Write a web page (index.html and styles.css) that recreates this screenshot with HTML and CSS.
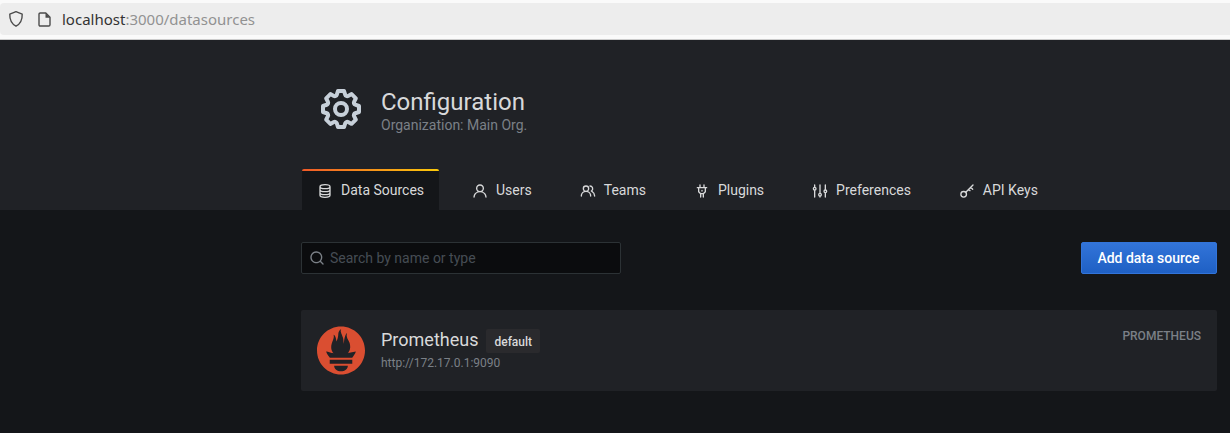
FILE: index.html
```html
<!DOCTYPE html>
<html lang="en">
<head>
<meta charset="utf-8">
<title>Configuration: Data Sources</title>
<link rel="stylesheet" href="styles.css">
</head>
<body>
<div class="browser-bar">
  <div class="address">
    <svg class="shield" width="16" height="18" viewBox="0 0 16 18"><path d="M8 1.600 14.200 4.100C14.400 9.400 12.500 13.800 8 16.200 3.500 13.800 1.600 9.400 1.800 4.100Z"/></svg>
    <svg class="page-icon" width="13" height="15" viewBox="0 0 13 15"><path class="outline" d="M2.300 1h5.500L12 5.200v7.500c0 .8-.5 1.300-1.300 1.300H2.300C1.500 14 1 13.500 1 12.700V2.300C1 1.500 1.500 1 2.300 1Z"/><path class="fold" d="M7.500 1v4.700H12Z"/></svg>
    <span class="url"><b>localhost</b>:3000/datasources</span>
  </div>
</div>
<header class="page-header">
  <div class="title-row">
    <svg class="icon gear" width="48" height="48" viewBox="0 0 24 24"><path d="M21.32,9.55l-1.89-.63.89-1.78A1,1,0,0,0,20.13,6L18,3.87a1,1,0,0,0-1.15-.19l-1.78.89-.63-1.89A1,1,0,0,0,13.5,2h-3a1,1,0,0,0-.95.68L8.92,4.57,7.14,3.68A1,1,0,0,0,6,3.87L3.87,6a1,1,0,0,0-.19,1.15l.89,1.78-1.89.63A1,1,0,0,0,2,10.5v3a1,1,0,0,0,.68.95l1.89.63-.89,1.78A1,1,0,0,0,3.87,18L6,20.13a1,1,0,0,0,1.15.19l1.78-.89.63,1.89a1,1,0,0,0,.95.68h3a1,1,0,0,0,.95-.68l.63-1.89,1.78.89A1,1,0,0,0,18,20.13L20.13,18a1,1,0,0,0,.19-1.15l-.89-1.78,1.89-.63A1,1,0,0,0,22,13.5v-3A1,1,0,0,0,21.32,9.55ZM20,12.78l-1.2.4A2,2,0,0,0,17.64,16l.57,1.14-1.1,1.1L16,17.64a2,2,0,0,0-2.79,1.16l-.4,1.2H11.22l-.4-1.2A2,2,0,0,0,8,17.64l-1.14.57-1.1-1.1L6.36,16A2,2,0,0,0,5.2,13.18L4,12.78V11.22l1.2-.4A2,2,0,0,0,6.36,8L5.79,6.89l1.1-1.1L8,6.36A2,2,0,0,0,10.82,5.2l.4-1.2h1.56l.4,1.2A2,2,0,0,0,16,6.36l1.14-.57,1.1,1.1L17.64,8a2,2,0,0,0,1.16,2.79l1.2.4ZM12,8a4,4,0,1,0,4,4A4,4,0,0,0,12,8Zm0,6a2,2,0,1,1,2-2A2,2,0,0,1,12,14Z"/></svg>
    <div>
      <h1>Configuration</h1>
      <div class="subtitle">Organization: Main Org.</div>
    </div>
  </div>
  <nav class="tabs">
    <a class="tab active"><svg class="icon line" width="16" height="16" viewBox="0 0 24 24"><path d="M4.500 5.500c0-1.800 3-3 7.500-3s7.500 1.200 7.500 3-3 3-7.500 3-7.500-1.200-7.500-3ZM4.500 5.500v13c0 1.800 3 3 7.500 3s7.500-1.200 7.500-3v-13M4.500 10c0 1.800 3 3 7.500 3s7.500-1.200 7.500-3M4.500 14.500c0 1.800 3 3 7.500 3s7.500-1.200 7.500-3"/></svg>Data Sources</a>
    <a class="tab"><svg class="icon" width="16" height="16" viewBox="0 0 24 24"><path d="M15.710,12.710a6,6,0,1,0-7.420,0,10,10,0,0,0-6.220,8.180,1,1,0,0,0,2,.22,8,8,0,0,1,15.900,0,1,1,0,0,0,1,.89h.11a1,1,0,0,0,.88-1.100A10,10,0,0,0,15.710,12.710ZM12,12a4,4,0,1,1,4-4A4,4,0,0,1,12,12Z"/></svg>Users</a>
    <a class="tab"><svg class="icon" width="16" height="16" viewBox="0 0 24 24"><path d="M12.300,12.220A4.920,4.920,0,0,0,14,8.500a5,5,0,0,0-10,0,4.920,4.920,0,0,0,1.700,3.720A8,8,0,0,0,1,19.500a1,1,0,0,0,2,0,6,6,0,0,1,12,0,1,1,0,0,0,2,0A8,8,0,0,0,12.300,12.220ZM9,11.500a3,3,0,1,1,3-3A3,3,0,0,1,9,11.500Zm9.740.32A5,5,0,0,0,15,3.500a1,1,0,0,0,0,2,3,3,0,0,1,3,3,3,3,0,0,1-1.500,2.590,1,1,0,0,0-.5.84,1,1,0,0,0,.45.86l.39.26.13.07a7,7,0,0,1,4,6.380,1,1,0,0,0,2,0A9,9,0,0,0,18.740,11.820Z"/></svg>Teams</a>
    <a class="tab"><svg class="icon line" width="16" height="16" viewBox="0 0 24 24"><path d="M5 7h14M9 7V3M15 7V3M7 7v6l3 3h4l3-3V7M10 16v5M14 16v5M12 11v1"/></svg>Plugins</a>
    <a class="tab"><svg class="icon line" width="16" height="16" viewBox="0 0 24 24"><path d="M4 3v3.500M4 11v10M12 3v12M12 20v1M20 3v7M20 15v6"/><circle cx="4" cy="8.500" r="2"/><circle cx="12" cy="17.500" r="2"/><circle cx="20" cy="12.500" r="2"/></svg>Preferences</a>
    <a class="tab"><svg class="icon line" width="16" height="16" viewBox="0 0 24 24"><circle cx="7" cy="17" r="4.200"/><path d="M10.200 13.800 21 3M17.500 6.500l3 3M14.500 9.500l2 2"/></svg>API Keys</a>
  </nav>
</header>
<main class="content">
  <div class="toolbar">
    <div class="search">
      <svg class="icon" width="16" height="16" viewBox="0 0 24 24"><path d="M21.710,20.290,18,16.610A9,9,0,1,0,16.610,18l3.680,3.680a1,1,0,0,0,1.420,0A1,1,0,0,0,21.710,20.290ZM11,18a7,7,0,1,1,7-7A7,7,0,0,1,11,18Z"/></svg>
      <span>Search by name or type</span>
    </div>
    <button class="add">Add data source</button>
  </div>
  <section class="card">
    <svg class="logo" width="48" height="48" viewBox="0 0 24 24"><path transform="translate(0 .2)" d="M12 0C5.373 0 0 5.372 0 12c0 6.627 5.373 12 12 12s12-5.373 12-12c0-6.628-5.373-12-12-12zm0 22.460c-1.885 0-3.414-1.260-3.414-2.814h6.828c0 1.553-1.528 2.813-3.414 2.813zm5.640-3.745H6.360v-2.046h11.280v2.046zm-.04-3.098H6.391c-.037-.043-.075-.086-.111-.13-1.155-1.401-1.427-2.133-1.690-2.879-.005-.025 1.400.287 2.395.511 0 0 .513.119 1.262.255-.72-.843-1.147-1.915-1.147-3.010 0-2.406 1.845-4.508 1.180-6.207.648.053 1.340 1.367 1.387 3.422.689-.951.977-2.690.977-3.755 0-1.103.727-2.385 1.454-2.429-.648 1.069.168 1.984.893 4.256.272.854.237 2.290.447 3.201.07-1.892.395-4.652 1.595-5.605-.529 1.200.079 2.702.494 3.424.671 1.164 1.078 2.047 1.078 3.716a4.642 4.642 0 0 1-1.110 2.996c.792-.149 1.340-.283 1.340-.283l2.573-.502s-.374 1.538-1.810 3.019z"/></svg>
    <div class="details">
      <div class="name">Prometheus<span class="badge">default</span></div>
      <div class="endpoint">http://172.17.0.1:9090</div>
    </div>
    <div class="type">PROMETHEUS</div>
  </section>
</main>
</body>
</html>
```
FILE: styles.css
```css
* { box-sizing: border-box; }
body {
  margin: 0;
  height: 433px;
  overflow: hidden;
  background: #141619;
  color: #d8d9da;
  font: 14px/20px Roboto, sans-serif;
}
.browser-bar {
  height: 40px;
  padding-top: 3px;
  background: #fafafa;
  border-bottom: 1px solid #ccc;
}
.address {
  display: flex;
  align-items: center;
  height: 32px;
  padding-left: 8px;
  background: #ededed;
  border-radius: 4px 0 0 4px;
}
.shield, .page-icon .outline { fill: none; stroke: #4b4b4b; stroke-width: 1.4; stroke-linejoin: round; }
.page-icon { margin: 0 11px 0 14px; }
.page-icon .fold { fill: #4b4b4b; }
.url {
  color: #929292;
  font: 15px/20px "Noto Sans", sans-serif;
}
.url b { color: #333; font-weight: 400; }
.page-header {
  height: 170px;
  padding: 45px 0 0 301px;
  background: #202226;
  border-bottom: 1px solid #202226;
}
.title-row { display: flex; gap: 16px; height: 84px; padding-left: 16px; }
.icon { flex: none; fill: currentColor; }
.line { fill: none; stroke: currentColor; stroke-width: 2; stroke-linecap: round; stroke-linejoin: round; }
.gear { color: #c7d0d9; }
h1 { margin: 3px 0 0; font-size: 24px; line-height: 28px; font-weight: 400; }
.subtitle { color: #7b8087; line-height: 18px; }
.tabs { display: flex; height: 41px; padding-left: 1px; }
.tab {
  display: flex;
  align-items: center;
  gap: 8px;
  height: 41px;
  margin-right: 16px;
  padding: 0 16px;
  white-space: nowrap;
}
.tab .icon { margin-top: 2px; }
.active {
  width: 137px;
  margin-right: 17px;
  padding-left: 15px;
  background: linear-gradient(90deg, #f05a28, #fbca0a) top / 100% 2px no-repeat, #141619;
  border-radius: 2px 2px 0 0;
}
.content { padding: 32px 13px 0 301px; }
.toolbar { display: flex; justify-content: space-between; }
.search {
  display: flex;
  align-items: center;
  gap: 5px;
  width: 320px;
  height: 32px;
  padding-left: 7px;
  background: #0b0c0e;
  border: 1px solid #2c3235;
  border-radius: 2px;
  color: #464c54;
}
.search .icon { color: #7b8087; }
.add {
  width: 136px;
  height: 32px;
  padding: 0 1px 0 0;
  border: 1px solid #3274d9;
  border-radius: 2px;
  background: linear-gradient(#3274d9, #1f60c4);
  color: #fff;
  font: 500 14px/30px Roboto, sans-serif;
}
.card {
  display: flex;
  height: 81px;
  margin-top: 36px;
  padding: 16px;
  background: #202226;
  border-radius: 2px;
}
.logo { fill: #da4e31; margin-right: 16px; overflow: visible; }
.details { flex: 1; }
.name { display: flex; align-items: center; gap: 8px; height: 28px; font-size: 18px; }
.badge {
  height: 24px;
  margin-top: 2px;
  padding: 0 8px;
  background: #2a2a2d;
  border-radius: 2px;
  font: 500 12px/26px Roboto, sans-serif;
}
.endpoint { color: #7b8087; font-size: 12px; line-height: 18px; }
.type { color: #7b8087; font: 500 12px/20px Roboto, sans-serif; }
```
